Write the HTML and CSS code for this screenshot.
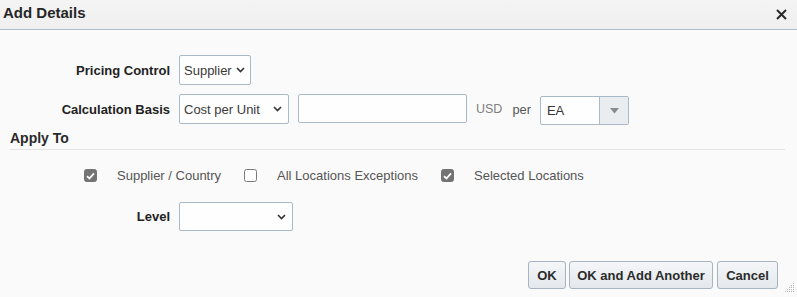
FILE: index.html
```html
<!DOCTYPE html>
<html lang="en">
<head>
<meta charset="utf-8">
<title>Add Details</title>
<link rel="stylesheet" href="styles.css">
</head>
<body>
<div class="dialog">
  <div class="header">
    <div class="title">Add Details</div>
    <svg class="close" width="11" height="11" viewBox="0 0 11 11"><path d="M1 1L10 10M10 1L1 10" stroke="#2a2a2a" stroke-width="2" fill="none"/></svg>
  </div>

  <div class="row row-pricing">
    <div class="label">Pricing Control</div>
    <div class="select sel-supplier"><span>Supplier</span><svg class="chev" width="9" height="6" viewBox="0 0 9 6"><path d="M1 1L4.5 4.5L8 1" stroke="#333" stroke-width="1.6" fill="none"/></svg></div>
  </div>

  <div class="row row-calc">
    <div class="label">Calculation Basis</div>
    <div class="select sel-cost"><span>Cost per Unit</span><svg class="chev" width="9" height="6" viewBox="0 0 9 6"><path d="M1 1L4.5 4.5L8 1" stroke="#333" stroke-width="1.6" fill="none"/></svg></div>
    <div class="textbox"></div>
    <span class="usd">USD</span>
    <span class="per">per</span>
    <div class="combo">
      <span class="combo-text">EA</span>
      <span class="combo-btn"><svg width="9" height="6" viewBox="0 0 9 6"><path d="M0 0H9L4.5 5.5Z" fill="#8a8a8a"/></svg></span>
    </div>
  </div>

  <div class="apply-head">Apply To</div>

  <div class="checks">
    <div class="check-item"><span class="box checked"><svg width="9" height="8" viewBox="0 0 9 8"><path d="M1 4.2L3.4 6.5L8 1.3" stroke="#fff" stroke-width="1.8" fill="none"/></svg></span><span class="check-text">Supplier / Country</span></div>
    <div class="check-item"><span class="box"></span><span class="check-text">All Locations Exceptions</span></div>
    <div class="check-item"><span class="box checked"><svg width="9" height="8" viewBox="0 0 9 8"><path d="M1 4.2L3.4 6.5L8 1.3" stroke="#fff" stroke-width="1.8" fill="none"/></svg></span><span class="check-text">Selected Locations</span></div>
  </div>

  <div class="row row-level">
    <div class="label">Level</div>
    <div class="select sel-level"><span></span><svg class="chev" width="9" height="6" viewBox="0 0 9 6"><path d="M1 1L4.5 4.5L8 1" stroke="#333" stroke-width="1.6" fill="none"/></svg></div>
  </div>

  <div class="buttons">
    <button class="btn btn-ok">OK</button>
    <button class="btn btn-add">OK and Add Another</button>
    <button class="btn btn-cancel">Cancel</button>
  </div>

  <svg class="grip" width="10" height="10" viewBox="0 0 10 10">
    <rect x="8" y="0" width="1" height="1" fill="#b5b5b5"/>
    <rect x="6" y="2" width="1" height="1" fill="#b5b5b5"/>
    <rect x="8" y="2" width="1" height="1" fill="#b5b5b5"/>
    <rect x="4" y="4" width="1" height="1" fill="#b5b5b5"/>
    <rect x="6" y="4" width="1" height="1" fill="#b5b5b5"/>
    <rect x="8" y="4" width="1" height="1" fill="#b5b5b5"/>
    <rect x="2" y="6" width="1" height="1" fill="#b5b5b5"/>
    <rect x="4" y="6" width="1" height="1" fill="#b5b5b5"/>
    <rect x="6" y="6" width="1" height="1" fill="#b5b5b5"/>
    <rect x="8" y="6" width="1" height="1" fill="#b5b5b5"/>
    <rect x="0" y="8" width="1" height="1" fill="#b5b5b5"/>
    <rect x="2" y="8" width="1" height="1" fill="#b5b5b5"/>
    <rect x="4" y="8" width="1" height="1" fill="#b5b5b5"/>
    <rect x="6" y="8" width="1" height="1" fill="#b5b5b5"/>
    <rect x="8" y="8" width="1" height="1" fill="#b5b5b5"/>
  </svg>
</div>
</body>
</html>
```
FILE: styles.css
```css
html, body {
  margin: 0;
  padding: 0;
  background: #fafafa;
}
body {
  font-family: "Liberation Sans", Arial, sans-serif;
  color: #333;
}
.dialog {
  position: relative;
  width: 797px;
  height: 297px;
  background: #fafafa;
  overflow: hidden;
}
.header {
  height: 29px;
  border-bottom: 1px solid #aabdcd;
  background: linear-gradient(#f4f4f4, #efefef);
  display: flex;
  justify-content: space-between;
  align-items: flex-start;
}
.title {
  font-size: 15px;
  font-weight: bold;
  line-height: 26px;
  padding-left: 3px;
  color: #262626;
}
.close {
  margin-top: 8.5px;
  margin-right: 10px;
}
.row {
  display: flex;
  align-items: center;
}
.label {
  width: 170px;
  margin-right: 9px;
  text-align: right;
  font-size: 13px;
  font-weight: bold;
  color: #222;
  flex-shrink: 0;
}
.row-pricing {
  margin-top: 25px;
  height: 30px;
}
.row-calc {
  margin-top: 9px;
  height: 30px;
  align-items: flex-start;
}
.row-calc .label {
  align-self: center;
}
.select {
  box-sizing: border-box;
  height: 30px;
  background: #fefefe;
  border: 1px solid #a9b9c8;
  border-radius: 2px;
  display: flex;
  align-items: center;
  justify-content: space-between;
  padding: 0 5px 0 4px;
  font-size: 13px;
  color: #3a3a3a;
}
.sel-supplier { width: 72px; }
.sel-cost { width: 110px; padding-right: 6px; }
.sel-level { width: 114px; height: 29px; padding-right: 6px; }
.chev { display: block; }
.textbox {
  box-sizing: border-box;
  width: 169px;
  height: 29px;
  margin-left: 9px;
  background: #fefefe;
  border: 1px solid #a9b9c8;
  border-radius: 2px;
}
.usd {
  margin-left: 9px;
  font-size: 12.5px;
  color: #7e7e7e;
  align-self: center;
}
.per {
  margin-left: 10px;
  font-size: 12.8px;
  color: #555;
  align-self: center;
}
.combo {
  box-sizing: border-box;
  margin-left: 9px;
  margin-top: 2px;
  width: 89px;
  height: 29px;
  border: 1px solid #a9b9c8;
  border-radius: 2px;
  background: #fefefe;
  display: flex;
  overflow: hidden;
}
.combo-text {
  flex: 1;
  font-size: 13px;
  color: #333;
  line-height: 27px;
  padding-left: 6px;
  border-right: 1px solid #a9b9c8;
}
.combo-btn {
  width: 28px;
  background: #eaedf0;
  display: flex;
  align-items: center;
  justify-content: center;
}
.combo-btn svg { display: block; margin-left: 1px; }
.apply-head {
  margin: 6px 12px 0 10px;
  font-size: 14px;
  font-weight: bold;
  line-height: 16px;
  padding-bottom: 3px;
  border-bottom: 1px solid #e2e4e6;
  color: #2a2a2a;
}
.checks {
  margin-top: 19px;
  padding-left: 84px;
  height: 13px;
  display: flex;
  align-items: center;
  gap: 23px;
}
.check-item {
  display: flex;
  align-items: center;
}
.box {
  box-sizing: border-box;
  width: 13px;
  height: 13px;
  border: 1.5px solid #7a7a7a;
  border-radius: 2.5px;
  background: #fff;
  margin-right: 20px;
  display: flex;
  align-items: center;
  justify-content: center;
}
.box.checked {
  background: #737373;
  border-color: #737373;
}
.box svg { display: block; }
.check-text {
  font-size: 13px;
  color: #555;
  line-height: 13px;
}
.row-level {
  margin-top: 20px;
  height: 29px;
}
.buttons {
  margin-top: 30px;
  margin-right: 19px;
  display: flex;
  justify-content: flex-end;
  gap: 3px;
}
.btn {
  box-sizing: border-box;
  height: 28px;
  padding: 0 6px;
  font-family: "Liberation Sans", Arial, sans-serif;
  font-size: 13px;
  font-weight: bold;
  color: #2b2b2b;
  background: linear-gradient(#f4f6f8, #e4e8ec);
  border: 1px solid #a7b3bf;
  border-radius: 3px;
}
.btn-ok { width: 38px; }
.btn-add { width: 144px; }
.btn-cancel { width: 61px; margin-left: 1px; }
.grip {
  position: absolute;
  right: 2px;
  bottom: 4px;
}
```
